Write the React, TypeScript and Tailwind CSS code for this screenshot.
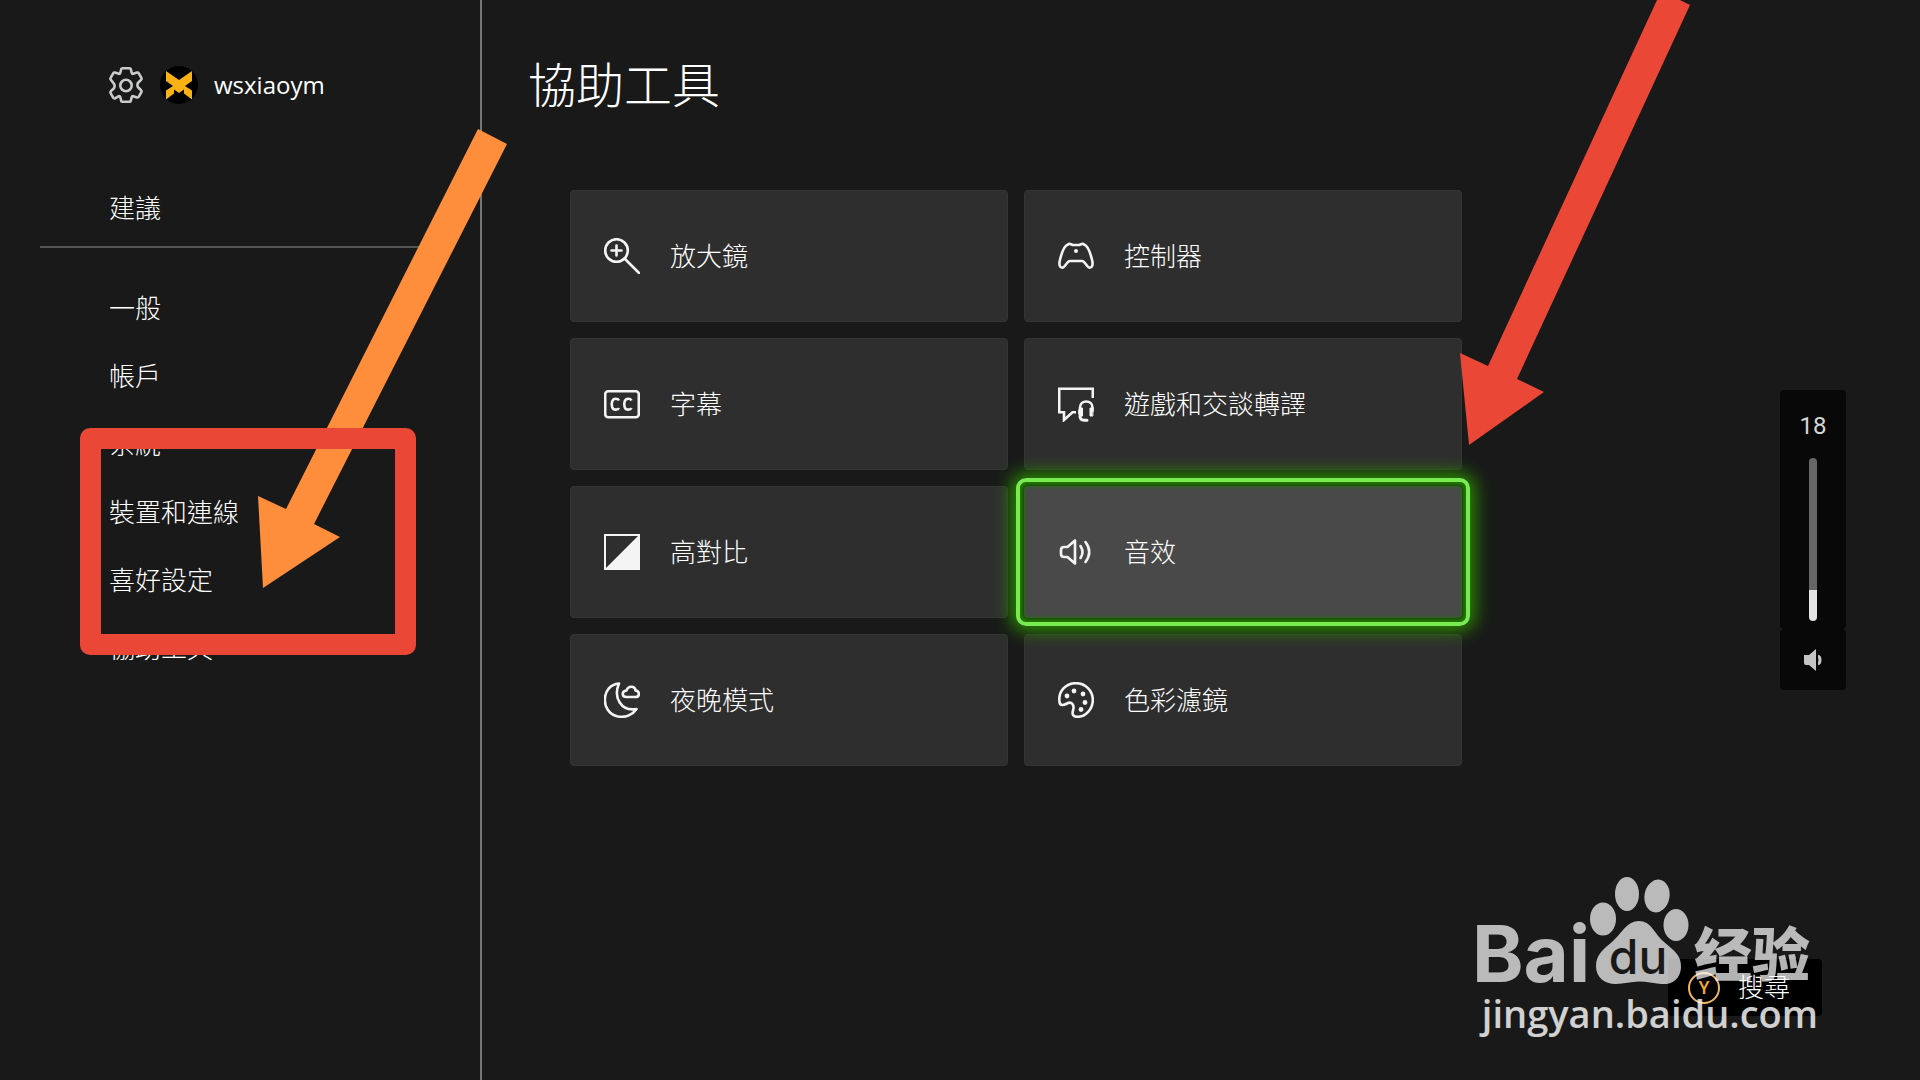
import type { ReactNode } from "react";

function GearIcon() {
    return (
        <svg width="36" height="38" viewBox="-1 -1 36 38" fill="none" stroke="#c9cbcd" strokeWidth="2.6" strokeLinejoin="round">
            <path d="M13.5 1.2h7q1 0 1.3 1l.9 3.6q.4 1.2 1.5 1l3.8-1.2q1.2-.3 1.8.7l2.6 4.6q.6 1-.3 1.9l-2.8 2.7q-.9.9-.9 2.5t.9 2.5l2.8 2.7q.9.9.3 1.9l-2.6 4.6q-.6 1-1.8.7l-3.8-1.2q-1.1-.2-1.5 1l-.9 3.6q-.3 1-1.3 1h-7q-1 0-1.3-1l-.9-3.6q-.4-1.2-1.5-1L6 31.400q-1.2.3-1.8-.7L1.600 26.100q-.6-1 .3-1.900l2.800-2.700q.9-.9.9-2.500t-.9-2.500L1.900 12.800q-.9-.9-.3-1.900l2.600-4.600q.6-1 1.800-.7l3.800 1.200q1.100.2 1.500-1l.9-3.600q.3-1 1.300-1z" />
            <circle cx="17" cy="18.500" r="5.700" />
        </svg>
    );
}

function Avatar() {
    return (
        <svg width="38" height="38" viewBox="0 0 38 38" className="rounded-full bg-black">
            <path d="M6 5l13 9 13-9v10l-7 5 7 4.500v9l-8-6v-4l-5 3.500-5-3.500v4l-8 6v-9l7-4.500-7-5z" fill="#f9b115" />
        </svg>
    );
}

function Icon({ children }: { children: ReactNode }) {
    return (
        <svg width="36" height="36" viewBox="0 0 36 36" fill="none" stroke="#f4f4f4" strokeWidth="2.600" strokeLinejoin="round" strokeLinecap="round" className="shrink-0">
            {children}
        </svg>
    );
}

const items = [
    {
        label: "放大鏡",
        icon: (
            <>
                <circle cx="12.500" cy="12.500" r="11.300" />
                <path d="M20.500 20.500L35 35M12.500 7.500v10M7.500 12.500h10" />
            </>
        ),
    },
    {
        label: "控制器",
        icon: (
            <>
                <path d="M10 6.500Q11 5.500 13 6.200L14.500 7h7L23 6.200Q25 5.500 26 6.500C29.500 7.500 32 13 34.300 23c.8 4-.3 6.800-2.300 6.800-3.500 0-4.500-6.800-8-6.800H12c-3.500 0-4.500 6.800-8 6.800-2 0-3.100-2.800-2.300-6.800C4 13 6.500 7.500 10 6.500z" />
                <circle cx="18" cy="13" r="2" fill="#f4f4f4" stroke="none" />
            </>
        ),
    },
    {
        label: "字幕",
        icon: (
            <>
                <rect x="1.200" y="5.200" width="33.600" height="26" rx="3" />
                <path d="M15 14.500c-1-2-5.500-2.800-6.800.800-.7 2-.7 4 0 6 1.300 3.400 5.800 2.600 6.800.700M27.500 14.500c-1-2-5.500-2.800-6.800.800-.7 2-.7 4 0 6 1.300 3.400 5.800 2.600 6.800.700" strokeLinecap="butt" />
            </>
        ),
    },
    {
        label: "遊戲和交談轉譯",
        icon: (
            <>
                <path d="M34.800 12V2.700H1.200v23.600H6V34l8.500-7.700H18" strokeLinejoin="miter" strokeLinecap="butt" />
                <path d="M22 25v-3.500c0-8 12.500-8 12.500 0V25" />
                <path d="M22 22h2.500v8H22c-2-1-2-7 0-8zM34.500 22H32v8h2.500z" fill="#f4f4f4" strokeWidth="1" />
                <path d="M22 30c0 3 1.500 4.200 4 4.200h3" strokeWidth="3" />
            </>
        ),
    },
    {
        label: "高對比",
        icon: (
            <>
                <rect x="1" y="1" width="34" height="34" strokeWidth="2" strokeLinejoin="miter" />
                <path d="M35 1v34H1z" fill="#f4f4f4" stroke="none" />
            </>
        ),
    },
    {
        label: "音效",
        icon: (
            <>
                <path d="M17 6.500v23L9.500 23H6q-3 0-3-3v-4q0-3 3-3h3.500z" />
                <path d="M22.500 12q4 6 0 12M27.500 8q7.500 10 0 20" />
            </>
        ),
        selected: true,
    },
    {
        label: "夜晚模式",
        icon: (
            <>
                <path d="M15 1.500C-3 3-4 30 13 34.300c9 2 16-2 19.500-7.300C17 29.500 9 15.500 15 1.500z" />
                <path d="M22.500 15c-5 0-5-6 0-6.500 1.500-5 8.500-5 9 0 4.500.500 4.500 6.500 0 6.500z" />
            </>
        ),
    },
    {
        label: "色彩濾鏡",
        icon: (
            <>
                <path d="M1.500 20C0 9 8 1.200 18 1.200c9.500 0 16.800 7.600 16.800 16.800S27.500 34.800 19.500 34.800c-5 0-5.500-3-4.500-6.300 1.800-6-1.500-9.500-6-7C5.500 23.500 2 24 1.500 20z" />
                <g fill="#f4f4f4" stroke="none">
                    <circle cx="9" cy="14" r="2.400" />
                    <circle cx="16" cy="9" r="2.400" />
                    <circle cx="25" cy="12" r="2.400" />
                    <circle cx="27" cy="20.500" r="2.400" />
                    <circle cx="23" cy="27.500" r="2.400" />
                </g>
            </>
        ),
    },
];

const navItems = ["一般", "帳戶", "系統", "裝置和連線", "喜好設定", "協助工具"];

function Sidebar() {
    return (
        <aside className="w-[482px] shrink-0 border-r-2 border-[#777] pt-[66px]">
            <div className="flex h-[38px] items-center pl-[108px]">
                <GearIcon />
                <div className="ml-4">
                    <Avatar />
                </div>
                <span className="ml-4 font-['Open_Sans'] text-2xl font-normal">wsxiaoym</span>
            </div>
            <nav className="mt-[70px]">
                <a href="#suggest" className="flex h-17 items-center pb-1 pl-[109px] text-[26px]">建議</a>
                <hr className="mx-10 mt-1 mb-[26px] border-t-2 border-[#555]" />
                {navItems.map((name) => (
                    <a key={name} href={"#" + name} className="flex h-17 items-center pb-1 pl-[109px] text-[26px]">
                        {name}
                    </a>
                ))}
            </nav>
        </aside>
    );
}

function Volume() {
    return (
        <div className="absolute top-[390px] right-[74px] w-[66px]">
            <div className="flex h-[239px] flex-col items-center rounded bg-[#080808] pt-5">
                <label htmlFor="volume" className="mb-4 font-[Roboto] text-2xl font-normal text-[#d5d5d5]">18</label>
                <input
                    id="volume"
                    type="range"
                    defaultValue={18}
                    className="h-[163px] w-2 appearance-none rounded-full bg-linear-to-t from-[#e4e4e4] from-19% to-[#666] to-19% [direction:rtl] [writing-mode:vertical-lr] [&::-webkit-slider-thumb]:appearance-none"
                />
            </div>
            <button aria-label="mute" className="flex h-[61px] w-full items-center justify-center rounded bg-[#080808]">
                <svg width="18" height="22" viewBox="0 0 18 22" fill="#c4c4c4">
                    <path d="M0 6h5l7-6v22l-7-6H2q-2 0-2-2z" />
                    <path d="M14 6q3.500 0 3.500 5T14 16v-2.500q1-2.500 0-5z" />
                </svg>
            </button>
        </div>
    );
}

// paw logo and site address in the corner
function Watermark() {
    return (
        <div className="pointer-events-none absolute right-[102px] bottom-[45px] w-[346px] text-white">
            <div className="flex items-end justify-between opacity-70">
                <span className="font-[Inter] text-[78px] leading-[74px] font-bold">Bai</span>
                <svg width="102" height="110" viewBox="0 0 102 110" className="-ml-1 mb-1" fill="#fff">
                    <ellipse cx="14" cy="42" rx="13" ry="16.500" />
                    <ellipse cx="38" cy="17" rx="12" ry="17" />
                    <ellipse cx="68" cy="19" rx="12.500" ry="16.500" transform="rotate(10 68 19)" />
                    <ellipse cx="87" cy="48" rx="12.500" ry="16" />
                    <path d="M50 44c12 0 15 12 24 20 10 9 19 14 18 27-1 12-10 17-20 16-8-1-14-2.500-22-2.500S35 107 27 107c-12 0-20-7-20-18 0-12 8-17 17-25S38 44 50 44z" />
                    <text x="49" y="97" textAnchor="middle" fontFamily="Inter" fontSize="48" fontWeight="500" fill="#191919">du</text>
                </svg>
                <span className="mr-2 pb-2 text-[58px] leading-[64px] font-black font-['Noto_Sans_CJK_SC',sans-serif]">经验</span>
            </div>
            <p className="text-right font-['Open_Sans'] text-[38px] leading-[44px] font-semibold opacity-80">jingyan.baidu.com</p>
        </div>
    );
}

export default function App() {
    return (
        <div className="relative flex min-h-screen overflow-hidden bg-[#191919] font-['Noto_Sans_CJK_TC',sans-serif] font-light text-white">
            <Sidebar />
            <main className="flex flex-1 flex-col pl-[46px]">
                <h1 className="mt-[46px] text-[48px] leading-[72px]">協助工具</h1>
                <div className="mt-[72px] ml-[42px] grid max-w-[892px] grid-cols-2 gap-4">
                    {items.map((item) => (
                        <button
                            key={item.label}
                            className={
                                "relative flex h-[132px] items-center gap-[30px] rounded border pl-[33px] text-left text-[26px] " +
                                (item.selected ? "z-10 border-[#4c4c4c] bg-[#494949]" : "border-[#353535] bg-[#2e2e2e]")
                            }
                        >
                            <Icon>{item.icon}</Icon>
                            <span className="pb-1">{item.label}</span>
                            {item.selected && (
                                <span className="absolute -inset-[9px] rounded-[10px] border-4 border-[#7aea52] shadow-[0_0_18px_5px_#2b8f00,inset_0_0_4px_4px_#1f7a00]" />
                            )}
                        </button>
                    ))}
                </div>
                <button className="mt-auto mr-[98px] mb-16 flex h-[57px] w-[154px] items-center gap-[18px] self-end rounded bg-black pl-5 text-[26px]">
                    <span className="flex size-8 items-center justify-center rounded-full border-2 border-[#f0b468] font-[Roboto] text-lg font-medium text-[#f5a93c]">Y</span>
                    <span className="pb-1">搜尋</span>
                </button>
            </main>

            <Volume />
            <svg className="pointer-events-none absolute top-0 left-0 z-20" width="1920" height="660" viewBox="0 0 1920 660">
                <path d="M478 129l29 15-193 380 26 13-77 51-5-92 28 13z" fill="#ff8e3c" />
                <path d="M1657 0h23l10 5-173 374 27 13-75 53-9-92 28 13z" fill="#ea4737" />
            </svg>
            <div className="pointer-events-none absolute top-[428px] left-[80px] z-20 h-[227px] w-[336px] rounded-[10px] border-21 border-[#ea4737]" />
            <Watermark />
        </div>
    );
}
